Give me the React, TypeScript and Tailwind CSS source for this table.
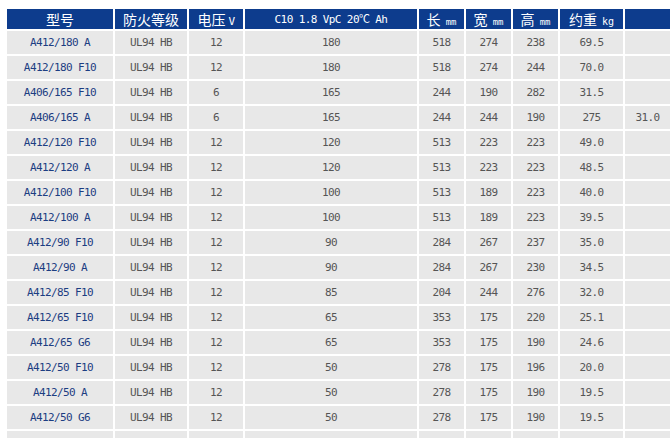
import React from 'react'

const rows: string[][] = [
    ['A412/180 A', 'UL94 HB', '12', '180', '518', '274', '238', '69.5', ''],
    ['A412/180 F10', 'UL94 HB', '12', '180', '518', '274', '244', '70.0', ''],
    ['A406/165 F10', 'UL94 HB', '6', '165', '244', '190', '282', '31.5', ''],
    ['A406/165 A', 'UL94 HB', '6', '165', '244', '244', '190', '275', '31.0'],
    ['A412/120 F10', 'UL94 HB', '12', '120', '513', '223', '223', '49.0', ''],
    ['A412/120 A', 'UL94 HB', '12', '120', '513', '223', '223', '48.5', ''],
    ['A412/100 F10', 'UL94 HB', '12', '100', '513', '189', '223', '40.0', ''],
    ['A412/100 A', 'UL94 HB', '12', '100', '513', '189', '223', '39.5', ''],
    ['A412/90 F10', 'UL94 HB', '12', '90', '284', '267', '237', '35.0', ''],
    ['A412/90 A', 'UL94 HB', '12', '90', '284', '267', '230', '34.5', ''],
    ['A412/85 F10', 'UL94 HB', '12', '85', '204', '244', '276', '32.0', ''],
    ['A412/65 F10', 'UL94 HB', '12', '65', '353', '175', '220', '25.1', ''],
    ['A412/65 G6', 'UL94 HB', '12', '65', '353', '175', '190', '24.6', ''],
    ['A412/50 F10', 'UL94 HB', '12', '50', '278', '175', '196', '20.0', ''],
    ['A412/50 A', 'UL94 HB', '12', '50', '278', '175', '190', '19.5', ''],
    ['A412/50 G6', 'UL94 HB', '12', '50', '278', '175', '190', '19.5', ''],
    ['A412/32 G6', 'UL94 HB', '12', '32', '210', '175', '175', '14.0', ''],
]

const mono = "font-['DejaVu_Sans_Mono','Noto_Sans_CJK_SC',monospace]"
const cjk = "font-['Noto_Sans_CJK_SC',sans-serif]"

const App = () => {
    return (
        <div className="w-[670px] h-[438px] overflow-hidden bg-white">
            <table className="ml-[5px] mt-[7px] table-fixed border-separate border-spacing-0.5 w-[667px]">
                <colgroup>
                    <col className="w-[106px]" />
                    <col className="w-[72px]" />
                    <col className="w-[54px]" />
                    <col className="w-[172px]" />
                    <col className="w-[45px]" />
                    <col className="w-[45px]" />
                    <col className="w-[45px]" />
                    <col className="w-[63px]" />
                    <col className="w-[45px]" />
                </colgroup>
                <thead>
                    <tr className="h-[20px] bg-[#0d3c8d] text-white">
                        <th className={`p-0 font-normal text-[14px] leading-none ${cjk}`}>型号</th>
                        <th className={`p-0 font-normal text-[14px] leading-none ${cjk}`}>防火等级</th>
                        <th className={`p-0 font-normal text-[14px] leading-none ${cjk}`}>
                            电压 <span className={`text-[11px] tracking-[-0.6px] ${mono}`}>V</span>
                        </th>
                        <th className={`p-0 font-normal text-[11px] tracking-[-0.6px] leading-none ${mono}`}>C10 1.8 VpC 20℃ Ah</th>
                        <th className={`p-0 font-normal text-[14px] leading-none ${cjk}`}>
                            长 <span className={`ml-0.5 text-[9px] ${mono}`}>mm</span>
                        </th>
                        <th className={`p-0 font-normal text-[14px] leading-none ${cjk}`}>
                            宽 <span className={`ml-0.5 text-[9px] ${mono}`}>mm</span>
                        </th>
                        <th className={`p-0 font-normal text-[14px] leading-none ${cjk}`}>
                            高 <span className={`ml-0.5 text-[9px] ${mono}`}>mm</span>
                        </th>
                        <th className={`p-0 font-normal text-[14px] leading-none ${cjk}`}>
                            约重 <span className={`ml-0.5 text-[10px] ${mono}`}>kg</span>
                        </th>
                        <th className="p-0"></th>
                    </tr>
                </thead>
                <tbody>
                    {rows.map((r, i) => (
                        <tr key={i} className={`h-[23px] bg-[#e8e8e8] text-[11px] tracking-[-0.6px] leading-none ${mono}`}>
                            {r.map((c, j) => (
                                <td
                                    key={j}
                                    className={`p-0 text-center whitespace-pre ${j === 0 ? 'text-[#1c3d82]' : 'text-[#555]'}`}
                                >
                                    {c}
                                </td>
                            ))}
                        </tr>
                    ))}
                </tbody>
            </table>
        </div>
    )
}

export default App
